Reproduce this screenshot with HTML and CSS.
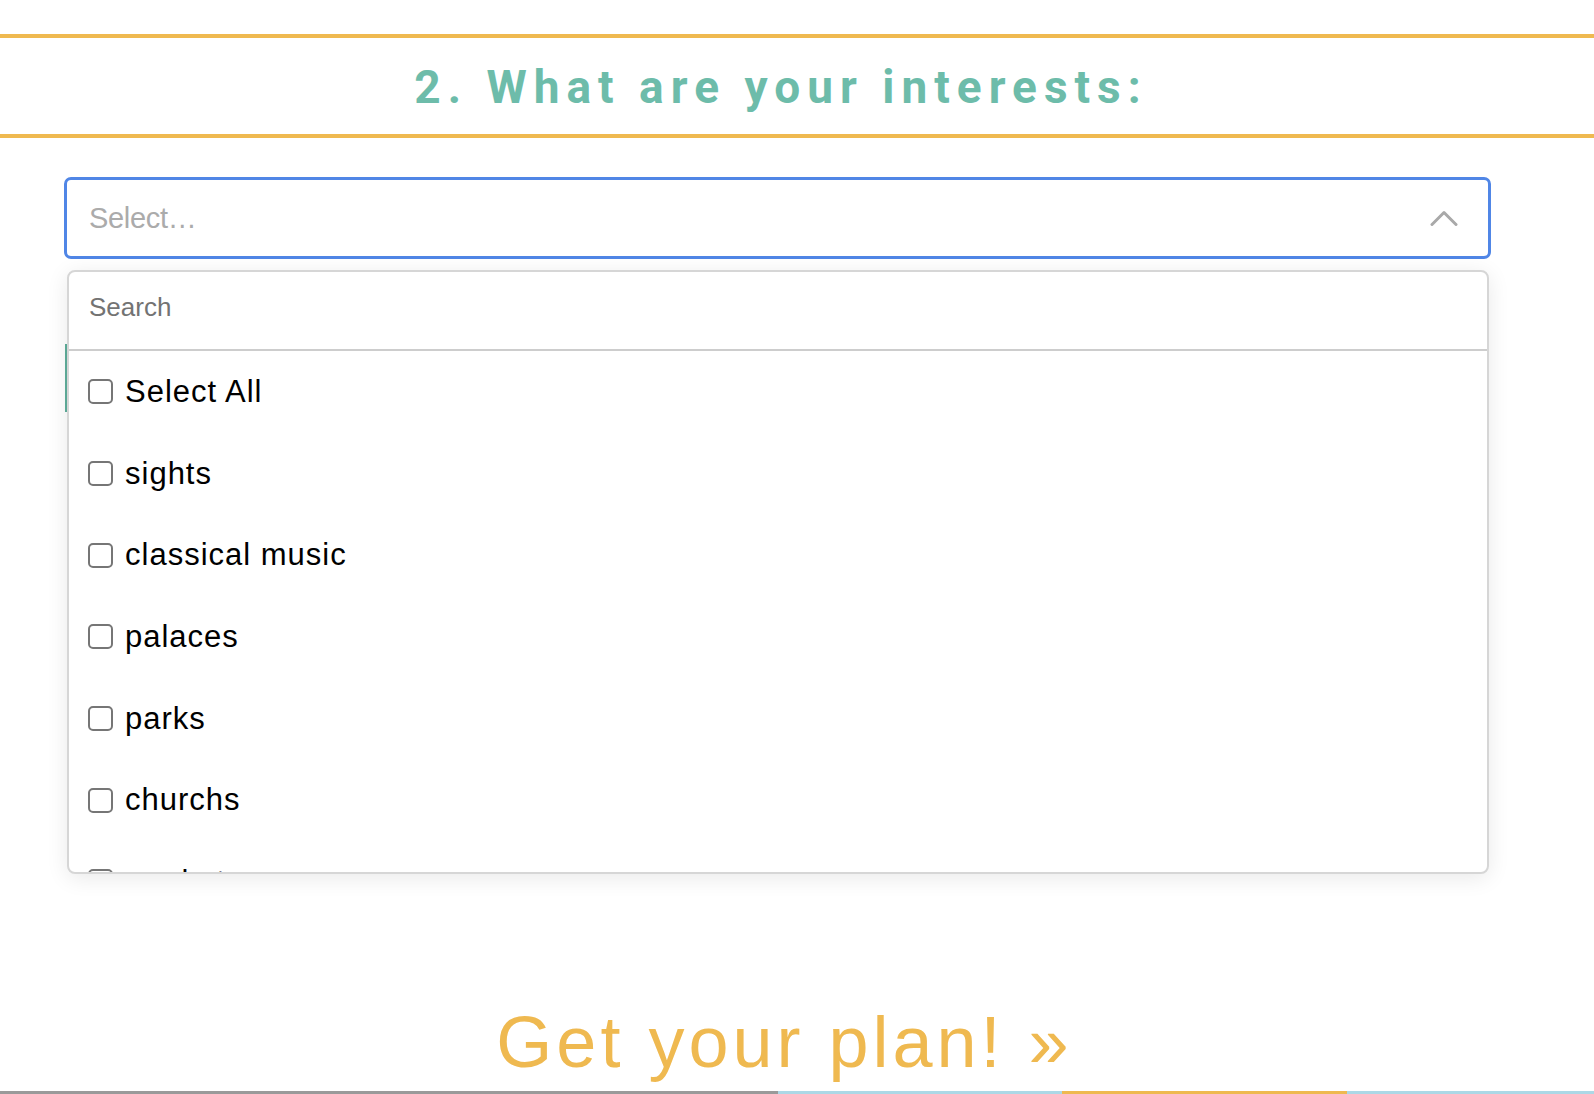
FILE: index.html
```html
<!DOCTYPE html>
<html lang="en">
<head>
<meta charset="utf-8">
<title>Interests</title>
<link rel="stylesheet" href="styles.css">
</head>
<body>
<header class="q-head">
  <h2 class="q-title">2. What are your interests:</h2>
</header>
<main class="wrap">
  <div class="ms">
    <div class="ms-control">
      <span class="ms-placeholder">Select…</span>
      <svg class="ms-chevron" width="28" height="16" viewBox="0 0 28 16" aria-hidden="true">
        <polyline points="2,14.5 14,2.5 26,14.5" fill="none" stroke="#a9a9a9" stroke-width="3" stroke-linecap="round" stroke-linejoin="round"/>
      </svg>
    </div>
    <div class="ms-menu">
      <div class="ms-search"><input class="ms-search-input" type="text" placeholder="Search"></div>
      <ul class="ms-list">
        <li class="ms-item"><span class="cb"></span><span>Select All</span></li>
        <li class="ms-item"><span class="cb"></span><span>sights</span></li>
        <li class="ms-item"><span class="cb"></span><span>classical music</span></li>
        <li class="ms-item"><span class="cb"></span><span>palaces</span></li>
        <li class="ms-item"><span class="cb"></span><span>parks</span></li>
        <li class="ms-item"><span class="cb"></span><span>churchs</span></li>
        <li class="ms-item"><span class="cb"></span><span>markets</span></li>
      </ul>
    </div>
  </div>
  <div class="next-block"></div>
  <div class="cta">Get your plan! »</div>
</main>
<div class="bar">
  <span class="seg seg-gray"></span>
  <span class="seg seg-blue1"></span>
  <span class="seg seg-orange"></span>
  <span class="seg seg-blue2"></span>
</div>
</body>
</html>
```

FILE: styles.css
```css
* { box-sizing: border-box; }

html, body {
  margin: 0;
  padding: 0;
  background: #ffffff;
}

body {
  font-family: "Liberation Sans", Arial, sans-serif;
  color: #000;
  overflow: hidden;
}

.q-head {
  margin-top: 34px;
  border-top: 4px solid #efb950;
  border-bottom: 4px solid #efb950;
  padding: 22px 103px 20px 64px;
}

.q-title {
  margin: 0;
  padding-left: 7px;
  text-align: center;
  font-family: Roboto, "Liberation Sans", sans-serif;
  font-weight: 700;
  font-size: 46px;
  line-height: 54px;
  letter-spacing: 7px;
  color: #6dbcaa;
}

.wrap {
  padding: 39px 103px 0 64px;
}

.ms {
  position: relative;
}

.ms-control {
  height: 82px;
  border: 3px solid #5086e6;
  border-radius: 7px;
  display: flex;
  align-items: center;
  justify-content: space-between;
  padding: 0 30px 0 22px;
}

.ms-placeholder {
  font-size: 29px;
  letter-spacing: -0.3px;
  color: #ababab;
}

.ms-chevron {
  display: block;
}

.ms-menu {
  position: absolute;
  z-index: 5;
  top: calc(100% + 11px);
  left: 3px;
  right: 2px;
  height: 604px;
  background: #fff;
  border: 2px solid #d6d6d6;
  border-radius: 8px;
  box-shadow: 0 4px 22px rgba(0, 0, 0, 0.09);
  overflow: hidden;
}

.ms-search {
  height: 79px;
  border-bottom: 2px solid #cdcdcd;
  padding: 18px 20px 0 20px;
}

.ms-search-input {
  display: block;
  width: 100%;
  border: 0;
  outline: 0;
  padding: 0;
  margin: 0;
  font-family: "Liberation Sans", Arial, sans-serif;
  font-size: 26px;
  line-height: 34px;
  height: 34px;
  color: #333;
  background: transparent;
}

.ms-search-input::placeholder {
  color: #737373;
}

.ms-list {
  list-style: none;
  margin: 0;
  padding: 0;
}

.ms-item {
  height: 81.7px;
  display: flex;
  align-items: center;
  gap: 12px;
  padding-left: 19px;
  font-size: 31px;
  letter-spacing: 1px;
  color: #000;
}

.cb {
  flex: 0 0 25px;
  width: 25px;
  height: 25px;
  border: 2px solid #767676;
  border-radius: 5px;
  background: #fff;
}

.next-block {
  margin: 85px 0 0 1px;
  height: 68px;
  border-left: 2px solid #5fae9b;
}

.cta {
  margin-top: 589px;
  padding-left: 14px;
  text-align: center;
  font-size: 72px;
  line-height: 82px;
  letter-spacing: 4px;
  color: #efb950;
}

.bar {
  display: flex;
  height: 3px;
  margin-top: 8px;
}

.seg { display: block; height: 3px; }
.seg-gray { width: 778px; background: #9a9a9a; }
.seg-blue1 { width: 284px; background: #add8e6; }
.seg-orange { width: 285px; background: #efb950; }
.seg-blue2 { flex: 1; background: #add8e6; }
```
